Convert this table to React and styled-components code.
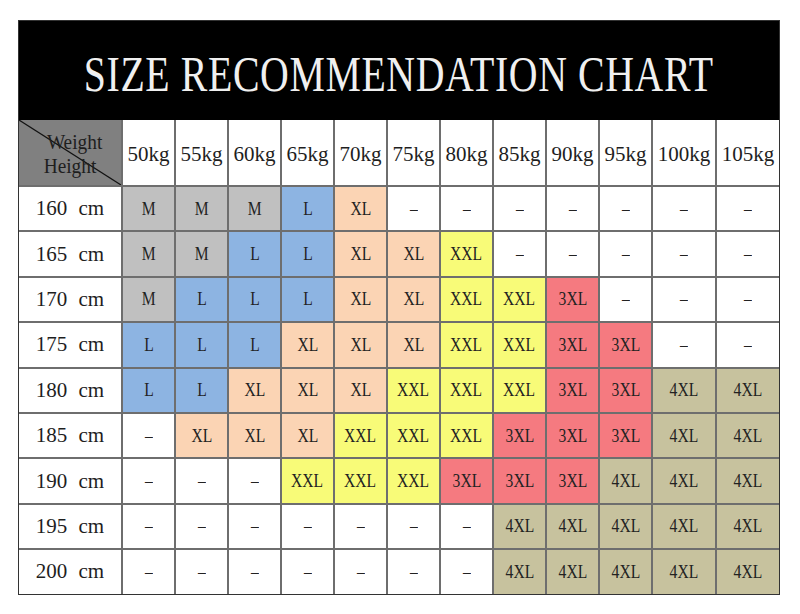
import React from "react";
import styled, { createGlobalStyle } from "styled-components";

const Global = createGlobalStyle`
  html, body { margin: 0; padding: 0; background: #ffffff; }
  body { font-family: "Liberation Serif", "Times New Roman", serif; }
`;

const Page = styled.div`
  width: 800px;
  height: 614px;
  padding: 20px 0 0 18px;
  box-sizing: border-box;
`;

const Chart = styled.div`
  width: 762px;
  border: 1px solid #333;
  box-sizing: border-box;
  display: flex;
  flex-direction: column;
`;

const TitleBar = styled.div`
  height: 99px;
  background: #000;
  display: flex;
  align-items: center;
  justify-content: center;
  padding-top: 8px;
  box-sizing: border-box;
`;

const Title = styled.h1`
  margin: 0;
  font-family: "Liberation Serif", "Times New Roman", serif;
  font-weight: 400;
  font-size: 51px;
  line-height: 1;
  color: #f0f0f0;
  white-space: nowrap;
  transform: scaleX(0.78);
  letter-spacing: 0.8px;
`;

const Grid = styled.div`
  display: grid;
  grid-template-columns: 102px repeat(10, 1fr) 62px 62px;
  grid-template-rows: 65px repeat(9, 43.4px);
  gap: 2px 2px;
  background: #6e6e6e;
`;

const palette = {
  M: "#c0c0c0",
  L: "#8db4e2",
  XL: "#fbd4b4",
  XXL: "#f8fb78",
  "3XL": "#f57a80",
  "4XL": "#c7c29e",
};

const Corner = styled.div`
  position: relative;
  background: #808080;
  display: flex;
  flex-direction: column;
  justify-content: center;
  padding: 2px 0 0 0;
  box-sizing: border-box;
  font-size: 21px;
  line-height: 24px;
  color: #1e1e1e;
  overflow: hidden;
`;

const CornerLabel = styled.span`
  display: block;
  text-align: center;
  transform: scaleX(0.92);
  padding-left: ${(p) => p.$shift}px;
`;

const Diagonal = styled.svg`
  position: absolute;
  inset: 0;
  width: 100%;
  height: 100%;
`;

const HeadCell = styled.div`
  background: #fff;
  display: flex;
  align-items: center;
  justify-content: center;
  font-size: 21px;
  color: #1e1e1e;
  padding-top: 4px;
  box-sizing: border-box;
  white-space: nowrap;
`;

const RowLabel = styled.div`
  background: #fff;
  display: flex;
  align-items: center;
  justify-content: center;
  font-size: 21px;
  color: #1e1e1e;
  word-spacing: 6px;
  white-space: nowrap;
`;

const SizeCell = styled.div`
  background: ${(p) => palette[p.$size] || "#ffffff"};
  display: flex;
  align-items: center;
  justify-content: center;
  font-size: 19.5px;
  color: #222;
  white-space: nowrap;
`;

const SizeText = styled.span`
  display: inline-block;
  transform: scaleX(0.8);
`;

const weights = ["50kg", "55kg", "60kg", "65kg", "70kg", "75kg", "80kg", "85kg", "90kg", "95kg", "100kg", "105kg"];

const rows = [
  ["160", "M M M L XL - - - - - - -"],
  ["165", "M M L L XL XL XXL - - - - -"],
  ["170", "M L L L XL XL XXL XXL 3XL - - -"],
  ["175", "L L L XL XL XL XXL XXL 3XL 3XL - -"],
  ["180", "L L XL XL XL XXL XXL XXL 3XL 3XL 4XL 4XL"],
  ["185", "- XL XL XL XXL XXL XXL 3XL 3XL 3XL 4XL 4XL"],
  ["190", "- - - XXL XXL XXL 3XL 3XL 3XL 4XL 4XL 4XL"],
  ["195", "- - - - - - - 4XL 4XL 4XL 4XL 4XL"],
  ["200", "- - - - - - - 4XL 4XL 4XL 4XL 4XL"],
];

export default function App() {
  return (
    <Page>
      <Global />
      <Chart>
        <TitleBar>
          <Title>SIZE RECOMMENDATION CHART</Title>
        </TitleBar>
        <Grid>
          <Corner>
            <Diagonal viewBox="0 0 100 100" preserveAspectRatio="none">
              <line x1="0" y1="0" x2="100" y2="100" stroke="#111" strokeWidth="1.2" vectorEffect="non-scaling-stroke" />
            </Diagonal>
            <CornerLabel $shift={10}>Weight</CornerLabel>
            <CornerLabel $shift={0}>Height</CornerLabel>
          </Corner>
          {weights.map((w) => (
            <HeadCell key={w}>{w}</HeadCell>
          ))}
          {rows.map(([h, sizes]) => (
            <React.Fragment key={h}>
              <RowLabel>{h} cm</RowLabel>
              {sizes.split(" ").map((s, i) => (
                <SizeCell key={i} $size={s}>
                  <SizeText>{s === "-" ? "–" : s}</SizeText>
                </SizeCell>
              ))}
            </React.Fragment>
          ))}
        </Grid>
      </Chart>
    </Page>
  );
}
